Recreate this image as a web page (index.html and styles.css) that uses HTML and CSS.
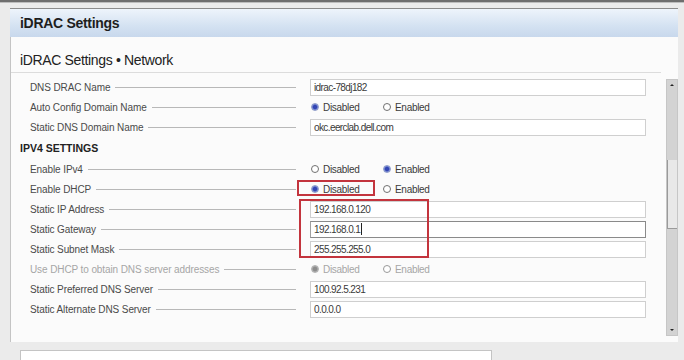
FILE: index.html
```html
<!DOCTYPE html>
<html lang="en">
<head>
    <meta charset="UTF-8">
    <title>iDRAC Settings</title>
    <link rel="stylesheet" href="styles.css">
</head>
<body>

<div class="top-edge"></div>
<div class="window">
    <div class="window-header">iDRAC Settings</div>
    <div class="panel">
        <h2 class="panel-title">iDRAC Settings &bull; Network</h2>
        <div class="panel-body">
            <div class="rows">
                <div class="row">
                    <span class="label">DNS DRAC Name</span><span class="leader"></span>
                    <div class="control"><span class="field">idrac-78dj182</span></div>
                </div>
                <div class="row">
                    <span class="label">Auto Config Domain Name</span><span class="leader"></span>
                    <div class="control">
                        <span class="radio checked">Disabled</span>
                        <span class="radio">Enabled</span>
                    </div>
                </div>
                <div class="row">
                    <span class="label">Static DNS Domain Name</span><span class="leader"></span>
                    <div class="control"><span class="field">okc.eerclab.dell.com</span></div>
                </div>

                <div class="section">IPV4 SETTINGS</div>

                <div class="row">
                    <span class="label">Enable IPv4</span><span class="leader"></span>
                    <div class="control">
                        <span class="radio">Disabled</span>
                        <span class="radio checked">Enabled</span>
                    </div>
                </div>
                <div class="row">
                    <span class="label">Enable DHCP</span><span class="leader"></span>
                    <div class="control">
                        <span class="radio checked">Disabled</span>
                        <span class="radio">Enabled</span>
                    </div>
                </div>
                <div class="row">
                    <span class="label">Static IP Address</span><span class="leader"></span>
                    <div class="control"><span class="field">192.168.0.120</span></div>
                </div>
                <div class="row">
                    <span class="label">Static Gateway</span><span class="leader"></span>
                    <div class="control"><span class="field focused">192.168.0.1<span class="caret"></span></span></div>
                </div>
                <div class="row">
                    <span class="label">Static Subnet Mask</span><span class="leader"></span>
                    <div class="control"><span class="field">255.255.255.0</span></div>
                </div>
                <div class="row disabled">
                    <span class="label">Use DHCP to obtain DNS server addresses</span><span class="leader"></span>
                    <div class="control">
                        <span class="radio checked">Disabled</span>
                        <span class="radio">Enabled</span>
                    </div>
                </div>
                <div class="row">
                    <span class="label">Static Preferred DNS Server</span><span class="leader"></span>
                    <div class="control"><span class="field">100.92.5.231</span></div>
                </div>
                <div class="row">
                    <span class="label">Static Alternate DNS Server</span><span class="leader"></span>
                    <div class="control"><span class="field">0.0.0.0</span></div>
                </div>

                <!-- annotation boxes -->
                <div class="mark mark-dhcp"></div>
                <div class="mark mark-static"></div>
            </div>
            <div class="scrollbar">
                <span class="arrow up"></span>
                <span class="thumb"></span>
                <span class="arrow down"></span>
            </div>
        </div>
    </div>
    <div class="bottom-box"></div>
</div>

</body>
</html>
```

FILE: styles.css
```css
body {
    font-family: "Liberation Sans", Arial, sans-serif;
    background-color: #ebebeb;
    margin: 0;
    width: 684px;
    height: 360px;
    overflow: hidden;
    color: #333;
}

.top-edge {
    height: 2px;
    background-color: #6e6e6e;
    border-bottom: 1px solid #bdbdbd;
    margin-bottom: 5px;
}

.window {
    margin-left: 10px;
    width: 668px;
}

.window-header {
    height: 28px;
    line-height: 28px;
    padding-left: 10px;
    border-top: 1px solid #8c8c8c;
    background: linear-gradient(#eef4fb, #d4e2f2 60%, #c8d8ec);
    font-size: 14px;
    font-weight: bold;
    letter-spacing: -0.3px;
    color: #1e1e1e;
}

.panel {
    background-color: #fbfbfb;
    border-left: 1px solid #c4c4c4;
    height: 305px;
}

.panel-title {
    margin: 0 17px 0 0;
    padding: 14px 0 3px 9px;
    font-size: 14px;
    line-height: 18px;
    font-weight: normal;
    letter-spacing: -0.35px;
    color: #222;
    border-bottom: 1px solid #dcdcdc;
}

.panel-body {
    display: flex;
    margin-top: 4px;
}

.rows {
    position: relative;
    width: 636px;
}

.row {
    display: flex;
    align-items: center;
    height: 20px;
    font-size: 10px;
}

.label {
    padding-left: 19px;
    color: #4a4a4a;
    letter-spacing: -0.1px;
}

.leader {
    flex: 1;
    margin: 0 14px 0 5px;
    border-top: 1px solid #b8b8b8;
}

.control {
    display: flex;
    align-items: center;
    width: 336px;
}

.field {
    display: block;
    width: 100%;
    height: 15px;
    line-height: 15px;
    padding-left: 3px;
    border: 1px solid #cfcfcf;
    background-color: white;
    color: #3a3a3a;
    letter-spacing: -0.6px;
}

.field.focused {
    border-color: #8a8a8a;
    border-left-color: #a0a0a0;
}

.caret {
    display: inline-block;
    width: 1px;
    height: 12px;
    margin-left: 1px;
    vertical-align: -2px;
    background-color: #222;
}

.radio {
    display: flex;
    align-items: center;
    width: 72px;
    color: #3a3a3a;
    letter-spacing: -0.3px;
}

.radio:before {
    content: "";
    width: 6px;
    height: 6px;
    margin: 0 4px 0 1px;
    border: 1px solid #707070;
    border-radius: 50%;
    background-color: white;
}

.radio.checked:before {
    background: radial-gradient(circle, #3346b4 40%, #8fa0df 75%);
    border-color: #8e9bc8;
}

.row.disabled .label,
.row.disabled .radio {
    color: #a6a6a6;
}

.row.disabled .radio.checked:before {
    background: radial-gradient(circle, #8c8c8c 45%, #c2c2c2 80%);
    border-color: #b0b0b0;
}

.row.disabled .radio:before {
    border-color: #999;
}

.section {
    height: 22px;
    line-height: 22px;
    padding-left: 9px;
    font-size: 10.5px;
    font-weight: bold;
    color: #222;
}

.mark {
    position: absolute;
    border: 2px solid #c3343d;
}

.mark-dhcp {
    left: 286px;
    top: 103px;
    width: 74px;
    height: 12px;
}

.mark-static {
    left: 288px;
    top: 122px;
    width: 126px;
    height: 55px;
}

.scrollbar {
    display: flex;
    flex-direction: column;
    align-items: center;
    width: 10px;
    height: 255px;
    margin: 2px 0 0 20px;
    background-color: #d3d3d3;
    border: 1px solid #c6c6c6;
}

.arrow {
    width: 0;
    height: 0;
    margin: 4px 0;
    border-left: 2px solid transparent;
    border-right: 2px solid transparent;
}

.arrow.up {
    border-bottom: 2px solid #222;
}

.arrow.down {
    margin-top: auto;
    border-top: 2px solid #222;
}

.thumb {
    width: 9px;
    height: 68px;
    margin-top: 70px;
    background-color: #e8e8e8;
    border-left: 1px solid #9a9a9a;
    border-bottom: 1px solid #9a9a9a;
}

.bottom-box {
    width: 470px;
    height: 20px;
    margin: 8px 0 0 10px;
    background-color: white;
    border: 1px solid #c4c4c4;
}
```
